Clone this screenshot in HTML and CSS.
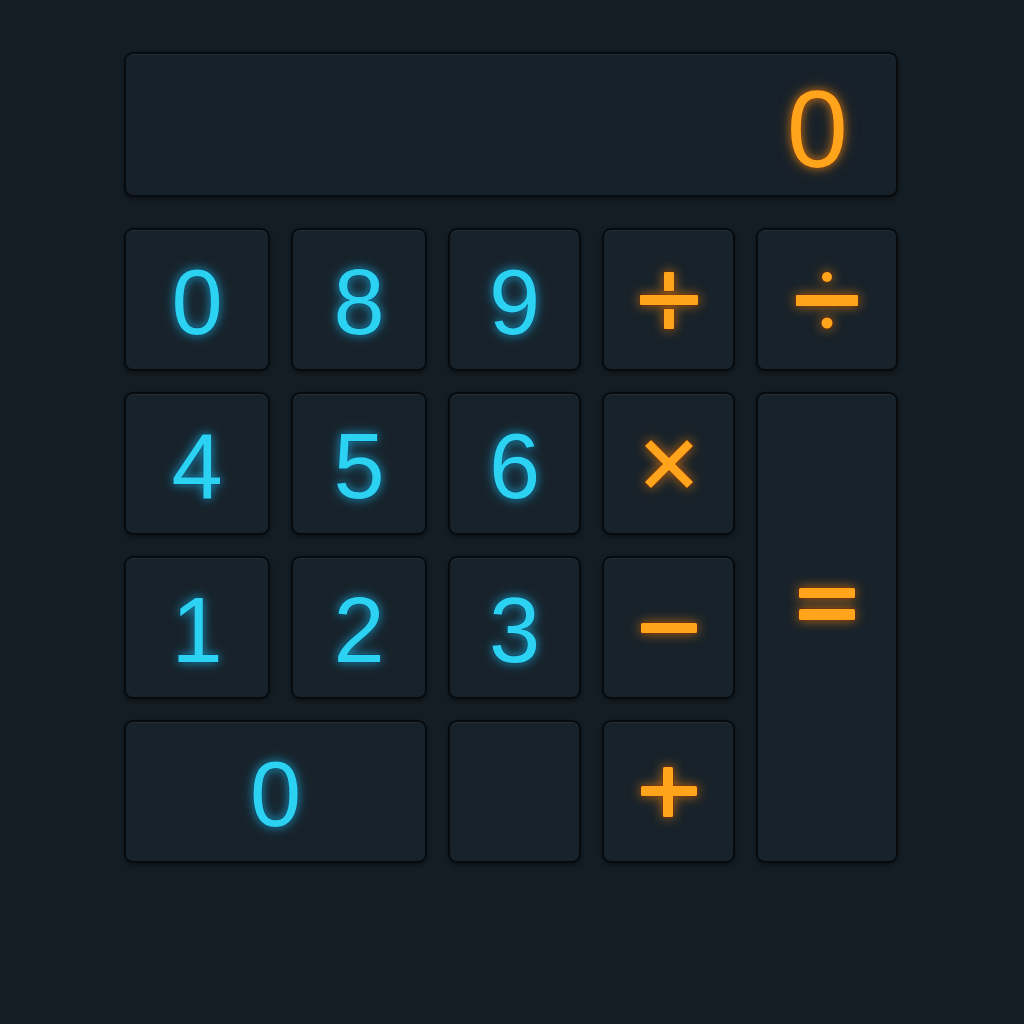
FILE: index.html
```html
<!DOCTYPE html>
<html lang="en">
<head>
<meta charset="utf-8">
<title>Calculator</title>
<link rel="stylesheet" href="styles.css">
</head>
<body>
<main class="calc">
  <div class="display"><span class="display-value">0</span></div>
  <div class="keys">
    <button class="key num">0</button>
    <button class="key num">8</button>
    <button class="key num">9</button>
    <button class="key op" aria-label="plus">
      <svg width="60" height="60" viewBox="0 0 60 60"><rect x="25" y="2" width="10" height="19" rx="1"/><rect x="1" y="25" width="58" height="10" rx="1"/><rect x="25" y="39" width="10" height="20" rx="1"/></svg>
    </button>
    <button class="key op" aria-label="divide">
      <svg width="62" height="60" viewBox="0 0 62 60"><circle cx="31" cy="7" r="5"/><rect x="0" y="25" width="62" height="11" rx="1"/><circle cx="31" cy="53" r="5.5"/></svg>
    </button>

    <button class="key num">4</button>
    <button class="key num">5</button>
    <button class="key num">6</button>
    <button class="key op" aria-label="multiply">
      <svg width="52" height="52" viewBox="0 0 52 52"><path d="M5 5 L47 47 M47 5 L5 47" stroke-width="8.5" stroke-linecap="butt" fill="none"/></svg>
    </button>
    <button class="key op equals" aria-label="equals">
      <svg width="58" height="34" viewBox="0 0 58 34"><rect x="1" y="1" width="56" height="10" rx="1.5"/><rect x="1" y="22" width="56" height="11" rx="1.5"/></svg>
    </button>

    <button class="key num">1</button>
    <button class="key num">2</button>
    <button class="key num">3</button>
    <button class="key op" aria-label="minus">
      <svg width="56" height="12" viewBox="0 0 56 12"><rect x="0" y="1" width="56" height="10" rx="1.5"/></svg>
    </button>

    <button class="key num zero">0</button>
    <button class="key blank" aria-label="decimal"></button>
    <button class="key op" aria-label="add">
      <svg width="56" height="52" viewBox="0 0 56 52"><rect x="22" y="1" width="10" height="50" rx="1.5"/><rect x="0" y="20" width="56" height="10" rx="1.5"/></svg>
    </button>
  </div>
</main>
</body>
</html>
```

FILE: styles.css
```css
* { box-sizing: border-box; }

html, body {
  margin: 0;
  padding: 0;
  background: #141d24;
  height: 100%;
}

body {
  font-family: "Liberation Sans", Arial, sans-serif;
}

.calc {
  width: 774px;
  margin: 0 0 0 124px;
  padding-top: 52px;
  display: flex;
  flex-direction: column;
  gap: 31px;
}

.display {
  height: 145px;
  background: #17212a;
  border: 2px solid #070b0e;
  border-radius: 9px;
  box-shadow: inset 0 1px 0 rgba(255,255,255,0.05), 0 2px 4px rgba(0,0,0,0.4);
  display: flex;
  align-items: center;
  justify-content: flex-end;
  padding: 0 48px 0 0;
}

.display-value {
  font-size: 110px;
  line-height: 1;
  color: #ffa41b;
  padding-top: 8px;
  text-shadow: 0 0 2px rgba(120, 30, 0, 0.9), 0 0 8px rgba(255, 150, 20, 0.7), 0 0 16px rgba(255, 140, 10, 0.35);
}

.keys {
  display: grid;
  grid-template-columns: 146px 136px 133px 133px 142px;
  grid-template-rows: repeat(4, 143px);
  gap: 21px;
}

.key {
  background: #18222a;
  border: 2px solid #070b0e;
  border-radius: 9px;
  box-shadow: inset 0 1px 0 rgba(255,255,255,0.06), 0 2px 4px rgba(0,0,0,0.4);
  display: flex;
  align-items: center;
  justify-content: center;
  padding: 0;
  font-family: "Liberation Sans", Arial, sans-serif;
  cursor: pointer;
}

.num {
  font-size: 92px;
  line-height: 1;
  color: #2bd2f2;
  padding-top: 4px;
  text-shadow: 0 0 2px rgba(0, 40, 80, 0.9), 0 0 8px rgba(30, 190, 240, 0.7), 0 0 16px rgba(30, 180, 240, 0.35);
}

.op svg {
  fill: #ffa41b;
  stroke: #ffa41b;
  overflow: visible;
  filter: drop-shadow(0 0 1px rgba(120, 30, 0, 1)) drop-shadow(0 0 6px rgba(255, 140, 10, 0.7));
}

.op svg rect, .op svg circle {
  stroke: none;
}

.equals {
  grid-column: 5;
  grid-row: 2 / span 3;
  padding-bottom: 48px;
}

.zero {
  grid-column: 1 / span 2;
}
```
